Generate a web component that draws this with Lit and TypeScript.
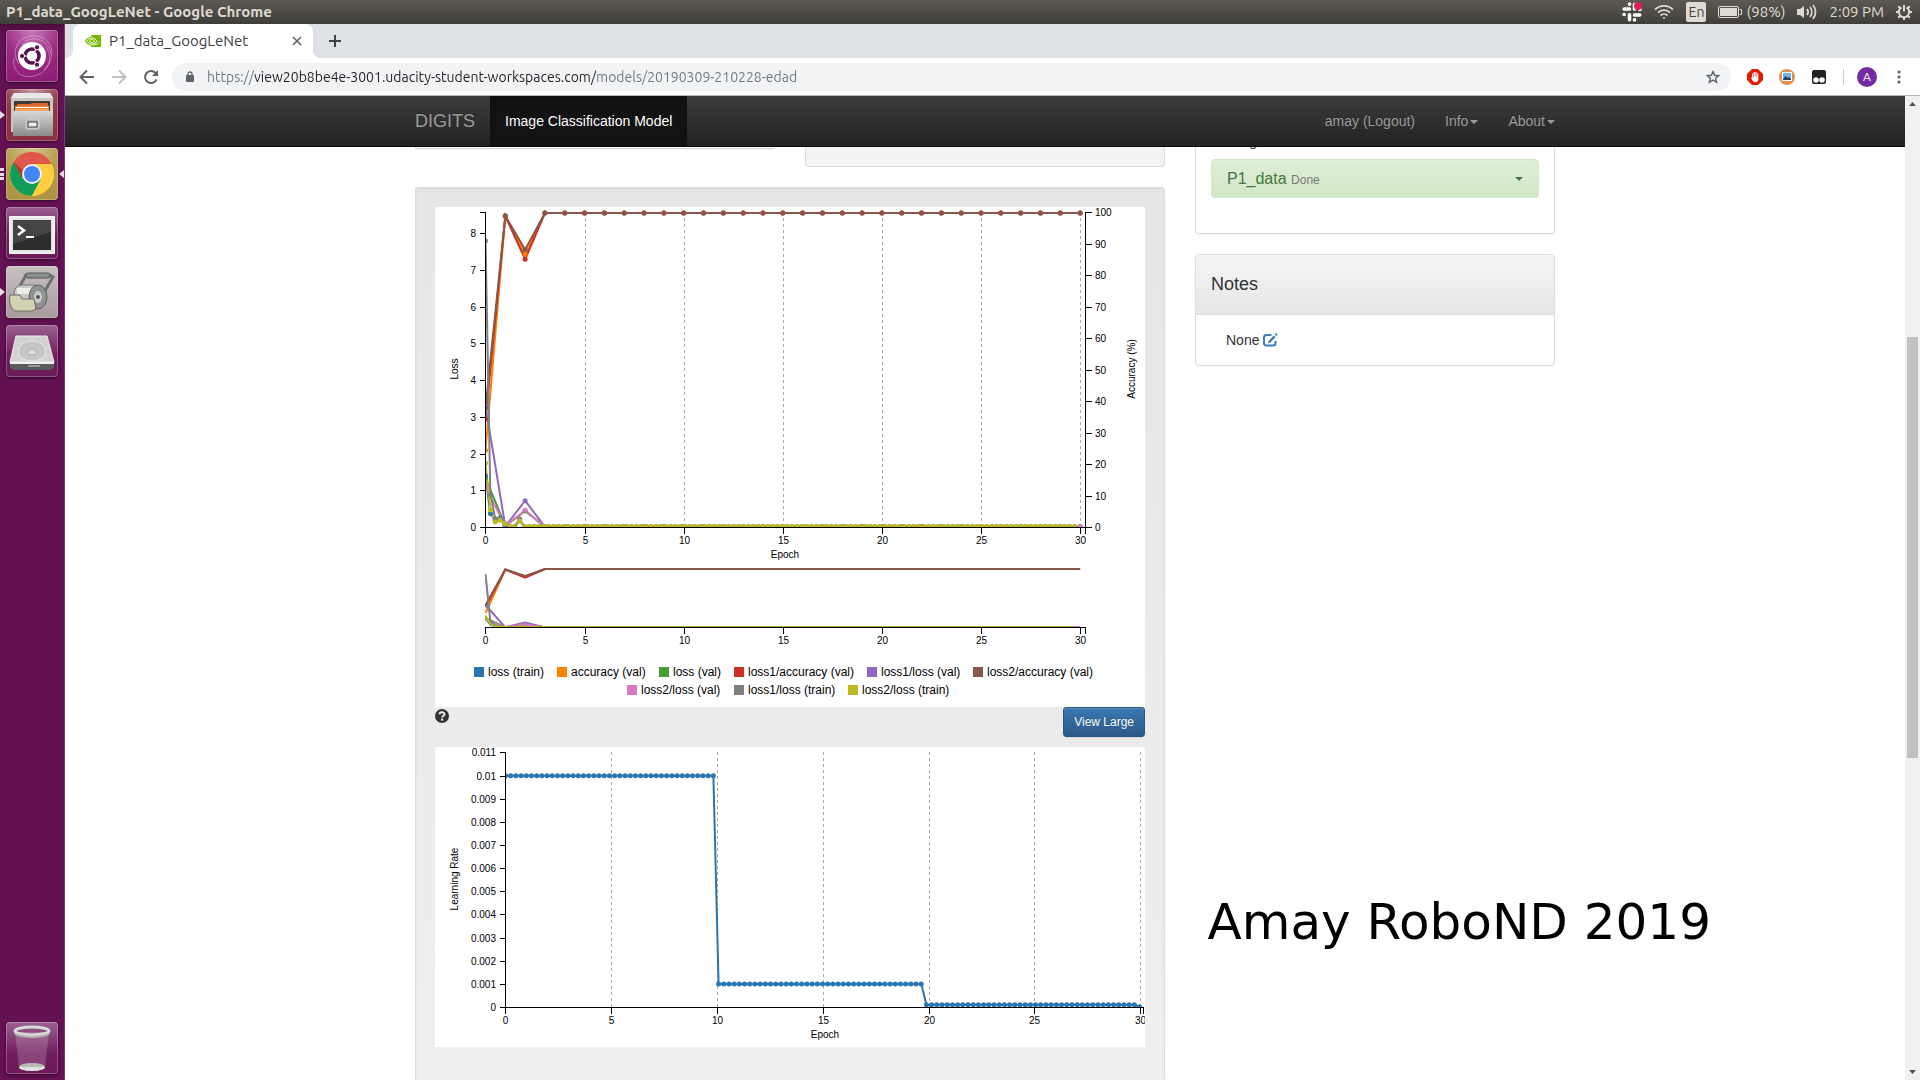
import { LitElement, html, svg, css } from "lit";
import { customElement } from "lit/decorators.js";

type Point = [number, number];

interface Series {
  name: string;
  color: string;
  axis: "loss" | "accuracy";
  points: Point[];
  legend: Point;
}

const range = (from: number, to: number, step = 1): number[] => {
  const out: number[] = [];
  for (let i = 0; from + i * step <= to + step / 1000; i++) out.push(from + i * step);
  return out;
};

/* Nearest pixel centre, so that one-pixel strokes stay sharp. */
const snap = (v: number): number => Math.ceil(v - 0.5) + 0.5;

const STEP = 0.2456;

/* Validation runs once per epoch and is flat from the third epoch on. */
const validation = (first: number[], rest: number): Point[] =>
  range(0, 30).map((e): Point => [e, e < first.length ? first[e] : rest]);

/* Training loss is sampled about four times per epoch. */
const training = (first: number[], rest: number): Point[] =>
  range(0, 121).map((i): Point => [i * STEP, i < first.length ? first[i] : rest]);

const SERIES: Series[] = [
  { name: "loss (train)", color: "#2a76b2", axis: "loss", legend: [39, 460], points: training([1.4, 0.38, 0.2, 0.26, 0.1, 0.03, 0.02, 0.2], 0.02) },
  { name: "accuracy (val)", color: "#ff8000", axis: "accuracy", legend: [122, 460], points: validation([24.6, 99, 86.8], 100) },
  { name: "loss (val)", color: "#449d32", axis: "loss", legend: [224, 460], points: validation([1.35, 0.04, 0.45], 0.02) },
  { name: "loss1/accuracy (val)", color: "#cf2e24", axis: "accuracy", legend: [299, 460], points: validation([34.4, 99, 85.3], 100) },
  { name: "loss1/loss (val)", color: "#9068bc", axis: "loss", legend: [432, 460], points: validation([3.3, 0.03, 0.73], 0.02) },
  { name: "loss2/accuracy (val)", color: "#88574c", axis: "accuracy", legend: [538, 460], points: validation([38, 99.1, 88.3], 100) },
  { name: "loss2/loss (val)", color: "#da78c1", axis: "loss", legend: [192, 478], points: validation([1.1, 0.04, 0.47], 0.02) },
  { name: "loss1/loss (train)", color: "#7f7f7f", axis: "loss", legend: [299, 478], points: training([7.8, 0.9, 0.24, 0.24, 0.06, 0.03, 0.03, 0.23], 0.02) },
  { name: "loss2/loss (train)", color: "#bcba20", axis: "loss", legend: [413, 478], points: training([1.75, 0.48, 0.15, 0.2, 0.11, 0.03, 0.02, 0.18], 0.03) },
];

const chartStyles = css`
  :host { display: block; background: #fff; }
  svg { display: block; width: 100%; height: auto; }
  text { font: 10px "Liberation Sans", Arial, sans-serif; fill: #000; }
  .end { text-anchor: end; }
  .mid { text-anchor: middle; }
  .legend { font-size: 12px; }
  .axis { fill: none; stroke: #000; shape-rendering: crispEdges; }
  .grid { stroke: #aaa; stroke-dasharray: 3 3; shape-rendering: crispEdges; }
  .line { fill: none; stroke-width: 2; }
`;

@customElement("loss-chart")
class LossChart extends LitElement {
  static styles = chartStyles;

  private x = (e: number) => 50.5 + e * 19.82;
  private y = (s: Series, v: number) => 320.5 - (s.axis === "loss" ? v * 36.75 : v * 3.145);
  private path(pts: Point[]) {
    return "M" + pts.map((p) => p.join(",")).join("L");
  }

  render() {
    const epochs = range(0, 30, 5);
    const main = SERIES.map((s) => ({ s, pts: s.points.map(([e, v]): Point => [this.x(e), this.y(s, v)]) }));
    const mini = SERIES.map((s) => ({
      s,
      pts: s.points.map(([e, v]): Point => [this.x(e), 420.5 - (320.5 - this.y(s, v)) * 0.186]),
    }));
    return html`
      <svg viewBox="0 0 710 500" role="img" aria-label="Loss and accuracy by epoch">
        <defs>
          <clipPath id="plot"><rect x="50" y="1" width="605" height="320"></rect></clipPath>
          <clipPath id="brush"><rect x="50" y="355" width="605" height="66"></rect></clipPath>
        </defs>
        ${epochs.slice(1).map((e) => svg`<line class="grid" x1=${snap(this.x(e))} x2=${snap(this.x(e))} y1="5" y2="320"></line>`)}
        <path class="axis" d="M44.5 5.5H50.5V320.5H650.5V326.5M656.5 5.5H650.5V320.5H656.5M44.5 320.5H50.5V326.5"></path>
        ${range(0, 8).map((v) => svg`
          <path class="axis" d=${`M44.5 ${Math.round(320 - v * 36.75) + 0.5}h6`}></path>
          <text class="end" x="41" y=${Math.round(324 - v * 36.75)}>${v}</text>`)}
        ${range(0, 100, 10).map((v) => svg`
          <path class="axis" d=${`M650.5 ${Math.round(320 - v * 3.15) + 0.5}h6`}></path>
          <text x="660" y=${Math.round(324 - v * 3.15)}>${v}</text>`)}
        ${epochs.map((e) => svg`
          <path class="axis" d=${`M${snap(this.x(e))} 320.5v6M${snap(this.x(e))} 420.5v6`}></path>
          <text class="mid" x=${snap(this.x(e))} y="337">${e}</text>
          <text class="mid" x=${snap(this.x(e))} y="437">${e}</text>`)}
        <g clip-path="url(#plot)">
          ${main.map(({ s, pts }) => svg`<path class="line" stroke=${s.color} d=${this.path(pts)}></path>`)}
          ${main.map(({ s, pts }) => pts.map(([cx, cy]) => svg`<circle cx=${cx} cy=${cy} r="2.5" fill=${s.color}></circle>`))}
        </g>
        <g clip-path="url(#brush)">
          ${mini.map(({ s, pts }) => svg`<path class="line" stroke=${s.color} d=${this.path(pts)}></path>`)}
        </g>
        <path class="axis" d="M50.5 5.5V320.5H650.5M50.5 426.5V420.5H650.5V426.5"></path>
        <text class="mid" x="350" y="351">Epoch</text>
        <text class="mid" transform="translate(23 162) rotate(-90)">Loss</text>
        <text class="mid" transform="translate(700 162) rotate(-90)">Accuracy (%)</text>
        ${SERIES.map(({ name, color, legend: [lx, ly] }) => svg`
          <rect x=${lx} y=${ly} width="10" height="10" fill=${color}></rect>
          <text class="legend" x=${lx + 14} y=${ly + 9}>${name}</text>`)}
      </svg>
    `;
  }
}

@customElement("rate-chart")
class RateChart extends LitElement {
  static styles = chartStyles;

  render() {
    const x = (e: number) => 70.5 + e * 21.16;
    const y = (v: number) => 260 - v * 23120;
    const rate = (i: number) => (i <= 40 ? 0.01 : i <= 80 ? 0.001 : i <= 121 ? 0.0001 : 0.00001);
    const pts = range(0, 122).map((i): Point => [x(i * STEP), y(rate(i))]);
    const epochs = range(0, 30, 5);
    const labels = ["0", "0.001", "0.002", "0.003", "0.004", "0.005", "0.006", "0.007", "0.008", "0.009", "0.01", "0.011"];
    return html`
      <svg viewBox="0 0 710 300" role="img" aria-label="Learning rate by epoch">
        <defs><clipPath id="plot"><rect x="70" y="1" width="640" height="260"></rect></clipPath></defs>
        ${epochs.slice(1).map((e) => svg`<line class="grid" x1=${snap(x(e))} x2=${snap(x(e))} y1="5" y2="260"></line>`)}
        ${labels.map((t, i) => svg`
          <path class="axis" d=${`M64.5 ${Math.round(260 - i * 23.15) + 0.5}h6`}></path>
          <text class="end" x="61" y=${Math.round(264 - i * 23.15)}>${t}</text>`)}
        ${epochs.map((e) => svg`
          <path class="axis" d=${`M${snap(x(e))} 260.5v6`}></path>
          <text class="mid" x=${snap(x(e))} y="277">${e}</text>`)}
        <g clip-path="url(#plot)">
          <path class="line" stroke="#2a76b2" d=${"M" + pts.map((p) => p.join(",")).join("L")}></path>
          ${pts.map(([cx, cy]) => svg`<circle cx=${cx} cy=${cy} r="2.5" fill="#2a76b2"></circle>`)}
        </g>
        <path class="axis" d="M64.5 5.5H70.5V260.5H708.5V266.5"></path>
        <text class="mid" x="390" y="291">Epoch</text>
        <text class="mid" transform="translate(23 132) rotate(-90)">Learning Rate</text>
      </svg>
    `;
  }
}

/* ---------- launcher artwork, 52 x 52 ---------- */

const dashArt = svg`
  <circle cx="26" cy="26" r="14" fill="#fff"></circle>
  <g fill="none" stroke="#fff" stroke-opacity=".35">
    <path d="M13 34C3 20 14 4 30 6s22 20 8 34"></path><path d="M40 17c8 12 2 26-12 29S6 40 8 28"></path>
    <path d="M16 15C24 4 42 8 45 24"></path>
  </g>
  <g stroke="#5e1048" stroke-width="3.6" fill="none"><circle cx="26" cy="26" r="7"></circle></g>
  <g stroke="#fff" stroke-width="1.2"><path d="M26 26L14 26M26 26l6-10.400M26 26l6 10.400"></path></g>
  <circle cx="26" cy="26" r="5" fill="#fff"></circle>
  <g fill="#5e1048" stroke="#fff"><circle cx="16" cy="26" r="2.600"></circle><circle cx="31" cy="17.300" r="2.600"></circle><circle cx="31" cy="34.700" r="2.600"></circle></g>`;

const filesArt = svg`
  <defs>
    <linearGradient id="metal" x2="0" y2="1"><stop stop-color="#d8d8d6"></stop><stop offset="1" stop-color="#8d8c8a"></stop></linearGradient>
  </defs>
  <path d="M8 4h36l3 5v34H5V9z" fill="#c9c8c6"></path><path d="M8 4h36l3 5H5z" fill="#e9e9e8"></path>
  <rect x="8" y="12" width="36" height="12" fill="#3e3a38"></rect>
  <path d="M11 15h13l2-1h16v8H11z" fill="#d9662c"></path><path d="M9 17h34v6H9z" fill="#e98b3e"></path>
  <path d="M10 18h32v1H10z" fill="#fff4e4"></path><path d="M9 20h34v3H9z" fill="#f2a25a"></path>
  <rect x="7" y="22" width="40" height="25" rx="1" fill="url(#metal)"></rect>
  <rect x="20" y="30" width="13" height="10" rx="2" fill="#b4b3b1" stroke="#d9d9d8"></rect>
  <rect x="22" y="33" width="9" height="5" fill="#eee" stroke="#444"></rect>`;

const chromeArt = svg`
  <circle cx="26" cy="26" r="22" fill="#ffcd40"></circle>
  <path d="M7.500 14.200A22 22 0 0 1 45.800 16H26L16.500 31z" fill="#e0574b"></path>
  <path d="M7.500 14A22 22 0 0 0 26 48L35 31H17z" fill="#0f9d58"></path>
  <path d="M26 48l9-17V16h10.500A22 22 0 0 1 26 48z" fill="#ffcd40"></path>
  <path d="M7.500 14L17 31l-.500-9z" fill="#b93527"></path>
  <circle cx="26" cy="26" r="10" fill="#f1f1f1"></circle><circle cx="26" cy="26" r="8" fill="#4285f4"></circle>`;

const terminalArt = svg`
  <rect x="3" y="9" width="46" height="38" rx="1" fill="#e4e4e2"></rect>
  <rect x="4" y="10" width="44" height="36" fill="none" stroke="#fff"></rect>
  <rect x="7" y="13" width="38" height="30" fill="#2d2d2d"></rect>
  <path d="M7 13h38v12L7 37z" fill="#444"></path>
  <path d="M12 19l6 4.500-6 4.500" fill="none" stroke="#fff" stroke-width="2.500"></path><path d="M20 30h8" stroke="#fff" stroke-width="2"></path>`;

const rollerArt = svg`
  <path d="M14 20L20 9h23l4 2-11 19" fill="none" stroke="#6c716f" stroke-width="3"></path>
  <rect x="20" y="7" width="24" height="5" rx="2" fill="#8b908e" stroke="#555"></rect>
  <rect x="8" y="19" width="28" height="24" rx="8" fill="#c8cac6" stroke="#777"></rect>
  <path d="M11 22h20v6H11z" fill="#ecedea"></path>
  <ellipse cx="32" cy="31" rx="9" ry="12" fill="#8f9492" stroke="#5b5f5d"></ellipse>
  <ellipse cx="32" cy="31" rx="4" ry="6" fill="#c9cccb"></ellipse><circle cx="32" cy="31" r="2" fill="#555"></circle>
  <path d="M4 29h10l2 4h12l2 10-4 2H9c-5-3-6-10-5-16z" fill="#d4d2b4" stroke="#6f6d58"></path>`;

const diskArt = svg`
  <path d="M10 11h31l7 26H4z" fill="#d2d2d2" stroke="#efefef"></path>
  <path d="M4 37h44v6l-4 2H8l-4-2z" fill="#5b5b5b"></path><path d="M4 37h44v2H4z" fill="#f2f2f2"></path>
  <ellipse cx="26" cy="26" rx="14" ry="10" fill="#c6c6c6" stroke="#e6e6e6"></ellipse>
  <ellipse cx="26" cy="27" rx="5" ry="3" fill="#dadada" stroke="#aaa"></ellipse>
  <path d="M22 41h12" stroke="#999" stroke-width="2"></path>`;

const trashArt = svg`
  <path d="M9 10h34l-4 36a14 4 0 0 1-26 0z" fill="#fff" fill-opacity=".18"></path>
  <ellipse cx="26" cy="45" rx="13" ry="4" fill="#b8bdb5"></ellipse><path d="M13 45a13 4 0 0 0 26 0" fill="#dfe2dc"></path>
  <ellipse cx="26" cy="9" rx="17" ry="4" fill="none" stroke="#d9dbd6" stroke-width="3"></ellipse>
  <path d="M8 9a18 5 0 0 0 36 0v2a18 5 0 0 1-36 0z" fill="#b3b6b0"></path>`;

const LAUNCHER = [
  { label: "Search your computer", tone: "violet", art: dashArt, running: "", active: false },
  { label: "Files", tone: "wine", art: filesArt, running: "one", active: false },
  { label: "Google Chrome", tone: "gold", art: chromeArt, running: "many", active: true },
  { label: "Terminal", tone: "plum", art: terminalArt, running: "", active: false },
  { label: "Paint roller", tone: "grey", art: rollerArt, running: "one", active: false },
  { label: "Disk", tone: "plum", art: diskArt, running: "", active: false },
];

@customElement("app-launcher")
class AppLauncher extends LitElement {
  static styles = css`
    :host {
      display: flex; flex-direction: column; gap: 7px; box-sizing: border-box;
      width: 65px; padding: 6px; border-right: 1px solid #7f3a70;
      background: linear-gradient(#4c0c3d, #621152 10px, #651153);
    }
    .item { position: relative; display: block; width: 52px; height: 52px; padding: 0; border: 0; border-radius: 4px; box-shadow: inset 0 0 0 1px rgba(255, 255, 255, .25), 0 1px 3px rgba(0, 0, 0, .5); }
    .violet { background: radial-gradient(circle at 50% 0, #c77ab8, #9b2a83 50%, #8a1b71); }
    .wine { background: radial-gradient(circle at 50% 0, #c79aa2, #8f3a48 50%, #8a3040); }
    .gold { background: radial-gradient(circle at 50% 0, #d6c48a, #b59a4a 50%, #ad9140); }
    .plum { background: linear-gradient(#9a6090, #701d5e 60%, #6c1a5a); }
    .grey { background: linear-gradient(#c9bfc2, #a8999d); }
    .trash { margin-top: auto; }
    .art { display: block; }
    .run, .now { position: absolute; top: 20px; width: 6px; height: 12px; fill: #e6dce4; }
    .run { left: -6px; }
    .now { right: -6px; }
  `;

  render() {
    return html`
      ${LAUNCHER.map((i) => html`
        <button class="item ${i.tone}" aria-label=${i.label}>
          <svg class="art" viewBox="0 0 52 52" width="52" height="52">${i.art}</svg>
          ${i.running === "one" ? html`<svg class="run" viewBox="0 0 6 12"><path d="M0 2l5 4-5 4z"></path></svg>` : ""}
          ${i.running === "many" ? html`<svg class="run" viewBox="0 0 6 12"><path d="M0 0h4v3H0zM0 5h4v3H0zM0 9h4v3H0z"></path></svg>` : ""}
          ${i.active ? html`<svg class="now" viewBox="0 0 6 12"><path d="M6 2L1 6l5 4z"></path></svg>` : ""}
        </button>`)}
      <button class="item plum trash" aria-label="Trash"><svg class="art" viewBox="0 0 52 52" width="52" height="52">${trashArt}</svg></button>
    `;
  }
}

@customElement("system-bar")
class SystemBar extends LitElement {
  static styles = css`
    :host {
      display: flex; justify-content: space-between; align-items: center; height: 24px; padding: 0 8px 0 6px;
      font: 15px/24px Ubuntu, "Noto Sans", sans-serif; color: #dfdbd2;
      background: linear-gradient(#5b5950, #3f3e39);
    }
    .title { font-weight: 700; }
    .tray { display: flex; align-items: center; gap: 12px; }
    .power { display: flex; align-items: center; gap: 4px; }
    .lang { width: 20px; height: 20px; border-radius: 2px; background: #dfdbd2; color: #45443e; font-size: 14px; line-height: 20px; text-align: center; }
    svg { display: block; }
  `;

  render() {
    return html`
      <span class="title">P1_data_GoogLeNet - Google Chrome</span>
      <div class="tray">
        <svg width="20" height="20" viewBox="0 0 20 20">
          <g stroke="#fff" stroke-width="3.600" stroke-linecap="round">
            <path d="M7.500 2.200V2M7.500 7H2.200M12.500 13h5.300M7.500 12.800v5M12.500 17.800v.2M2 12.500h.2M18 7.500h-.2M12.500 2.500V7"></path>
          </g>
          <circle cx="16" cy="4" r="4" fill="#e01e5a"></circle>
        </svg>
        <svg width="20" height="16" viewBox="0 0 20 16" fill="none" stroke="#dfdbd2" stroke-width="1.800">
          <path d="M1 5.500a13 13 0 0 1 18 0M4 8.500a9 9 0 0 1 12 0M6.500 11.500a5 5 0 0 1 7 0"></path><circle cx="10" cy="14" r="1" fill="#dfdbd2" stroke="none"></circle>
        </svg>
        <span class="lang">En</span>
        <span class="power">
          <svg width="24" height="14" viewBox="0 0 24 14">
            <rect x=".5" y="1.500" width="20" height="11" rx="1.500" fill="none" stroke="#dfdbd2"></rect><rect x="2" y="3" width="17" height="8" fill="#dfdbd2"></rect>
            <path d="M21.500 4.500h2v5h-2" fill="none" stroke="#dfdbd2"></path>
          </svg>(98%)
        </span>
        <svg width="20" height="18" viewBox="0 0 20 18" fill="none" stroke="#dfdbd2" stroke-width="1.800">
          <path d="M0 6h3l4-3v12l-4-3H0z" fill="#dfdbd2" stroke="none"></path><path d="M10 6a5 5 0 0 1 0 6M13 4a8 8 0 0 1 0 10M16 2a11 11 0 0 1 0 14"></path>
        </svg>
        <span>2:09 PM</span>
        <svg width="16" height="16" viewBox="0 0 16 16" fill="none" stroke="#dfdbd2" stroke-width="2">
          <path d="M5.500 3.400a5.200 5.200 0 1 0 5 0M8 1v6.500"></path><path d="M0 8h3M13 8h3M8 13v3M2.300 2.300l2 2M13.700 2.300l-2 2M2.300 13.700l2-2M13.700 13.700l-2-2"></path>
        </svg>
      </div>
    `;
  }
}

@customElement("browser-chrome")
class BrowserChrome extends LitElement {
  static styles = css`
    :host { display: block; font-family: Ubuntu, "Noto Sans", sans-serif; }
    button { padding: 0; border: 0; background: none; }
    svg { display: block; }
    .strip { display: flex; align-items: center; height: 34px; padding-left: 8px; background: #dee1e6; }
    .tab { position: relative; display: flex; align-items: center; gap: 8px; box-sizing: border-box; width: 240px; height: 34px; padding: 0 11px 0 12px; border-radius: 8px 8px 0 0; background: #fff; font-size: 15px; line-height: 20px; color: #3c4043; }
    .tab::before, .tab::after { content: ""; position: absolute; bottom: 0; width: 8px; height: 8px; }
    .tab::before { left: -8px; background: radial-gradient(circle at 0 0, transparent 8px, #fff 8px); }
    .tab::after { right: -8px; background: radial-gradient(circle at 100% 0, transparent 8px, #fff 8px); }
    .name { flex: 1; }
    .new { margin-left: 16px; }
    .bar { display: flex; align-items: center; gap: 16px; box-sizing: border-box; height: 38px; padding: 0 17px 0 14px; border-bottom: 1px solid #b4b6b5; background: #fff; }
    .address { flex: 1; display: flex; align-items: center; height: 28px; margin-left: -3px; padding: 0 11px 0 14px; border-radius: 14px; background: #f1f3f4; }
    .url {
      flex: 1; min-width: 0; margin-left: 13px; padding: 0; border: 0; outline: 0;
      font: 14px/24px Ubuntu, "Noto Sans", sans-serif; color: transparent;
      background: linear-gradient(90deg, #70757a 48px, #202124 48px, #202124 389px, #70757a 389px);
      background-clip: text; -webkit-background-clip: text;
    }
    .rule { width: 1px; height: 16px; margin-right: -3px; background: #c8cacc; }
    .avatar { width: 20px; height: 20px; margin-right: 2px; border-radius: 10px; background: #732da0; color: #fff; font: 12px/20px Ubuntu, "Noto Sans", sans-serif; }
  `;

  render() {
    return html`
      <div class="strip">
        <div class="tab">
          <svg width="16" height="12" viewBox="0 0 16 12">
            <path d="M6 0h10v12H6v-1.600C3.500 10 1 8.500 0 6c1.500-2.500 3.500-3.800 6-4.200z" fill="#76b900"></path>
            <path d="M6 1.800V.8M1.800 6c1.200-2 3-3 5.200-2.900 2.300.1 4 1.500 5 2.900-1.200 1.800-3 3.100-5.200 3.100S3 8 1.800 6z" fill="none" stroke="#fff" stroke-width=".9"></path>
            <path d="M4.200 6c.8-1.300 1.800-1.600 2.800-1.400S9 5.300 9.600 6c-.9 1.200-1.700 1.800-2.700 1.600S4.800 7 4.200 6zM6 9.500c4 .8 7-.5 8.500-3" fill="none" stroke="#fff" stroke-width=".8"></path>
          </svg>
          <span class="name">P1_data_GoogLeNet</span>
          <button aria-label="Close tab"><svg width="10" height="10" viewBox="0 0 10 10" stroke="#5f6368" stroke-width="1.600"><path d="M1 1l8 8M9 1L1 9"></path></svg></button>
        </div>
        <button class="new" aria-label="New tab"><svg width="12" height="12" viewBox="0 0 12 12" stroke="#3c4043" stroke-width="2"><path d="M6 0v12M0 6h12"></path></svg></button>
      </div>
      <div class="bar">
        <button aria-label="Back"><svg width="16" height="16" viewBox="0 0 16 16" fill="none" stroke="#5f6368" stroke-width="2"><path d="M15 8H2M8 1.500L1.500 8 8 14.500"></path></svg></button>
        <button aria-label="Forward"><svg width="16" height="16" viewBox="0 0 16 16" fill="none" stroke="#bdc1c6" stroke-width="2"><path d="M1 8h13M8 1.500L14.500 8 8 14.500"></path></svg></button>
        <button aria-label="Reload"><svg width="16" height="16" viewBox="0 0 16 16" fill="none" stroke="#5f6368" stroke-width="2"><path d="M13.600 10.400A6 6 0 1 1 12.500 4"></path><path d="M15 1v6H9z" fill="#5f6368" stroke="none"></path></svg></button>
        <div class="address">
          <svg width="8" height="12" viewBox="0 0 8 12"><rect y="4" width="8" height="7" rx="1" fill="#5f6368"></rect><path d="M2 4.500V3a2 2 0 0 1 4 0v1.500" fill="none" stroke="#5f6368" stroke-width="1.300"></path></svg>
          <input class="url" type="text" aria-label="Address" value="https://view20b8be4e-3001.udacity-student-workspaces.com/models/20190309-210228-edad">
          <button aria-label="Bookmark"><svg width="14" height="14" viewBox="0 0 14 14" fill="none" stroke="#5f6368" stroke-width="1.400"><path d="M7 1.500l1.600 3.800 4.100.3-3.100 2.700 1 4L7 10.100l-3.600 2.200 1-4L1.300 5.600l4.100-.3z"></path></svg></button>
        </div>
        <button aria-label="Ad blocker"><svg width="16" height="16" viewBox="0 0 16 16"><path d="M5 0h6l5 5v6l-5 5H5l-5-5V5z" fill="#e01b00"></path><path d="M5 4.500h1.200V8h.5V3h1.200v4.500h.5V3h1.200v5h.5V4.500h1.200V10c0 2-1 3.300-2.800 3.300C6.500 13.300 5 11.500 4 8.800L5 8.500z" fill="#fff"></path></svg></button>
        <button aria-label="Screenshot"><svg width="16" height="16" viewBox="0 0 16 16"><circle cx="8" cy="8" r="8" fill="#e0914f"></circle><rect x="3" y="3" width="10" height="9" fill="#fff"></rect><rect x="4" y="4" width="8" height="7" fill="#6fb6ea"></rect><path d="M4 10l2.500-3L9 9l1-1 2 2v1H4z" fill="#23405f"></path></svg></button>
        <button aria-label="Scripts"><svg width="16" height="16" viewBox="0 0 16 16"><rect x="1" y="1" width="14" height="14" rx="2" fill="#222"></rect><circle cx="5" cy="11" r="2.800" fill="#fff"></circle><circle cx="11" cy="11" r="2.800" fill="#fff"></circle></svg></button>
        <span class="rule"></span>
        <button class="avatar" aria-label="Profile A">A</button>
        <button aria-label="Menu"><svg width="8" height="16" viewBox="0 0 8 16" fill="#5f6368"><circle cx="4" cy="3" r="1.600"></circle><circle cx="4" cy="8" r="1.600"></circle><circle cx="4" cy="13" r="1.600"></circle></svg></button>
      </div>
    `;
  }
}

@customElement("digits-page")
class DigitsPage extends LitElement {
  static styles = css`
    :host { display: flex; flex-direction: column; position: relative; overflow: hidden; background: #fff; font: 14px/20px "Liberation Sans", Arial, sans-serif; color: #333; }
    a { color: inherit; text-decoration: none; }
    svg { display: block; }
    .nav { flex: none; border-bottom: 1px solid #080808; background: linear-gradient(#3c3c3c, #222); color: #9d9d9d; text-shadow: 0 -1px 0 rgba(0, 0, 0, .25); }
    .inner, .columns { display: flex; box-sizing: border-box; width: 100%; max-width: 1170px; margin: 0 auto; }
    .inner { height: 50px; padding-left: 15px; }
    .inner a { padding: 15px; }
    .inner .brand { padding-left: 0; font-size: 18px; }
    .inner .current { background: #131313; color: #fff; box-shadow: inset 0 3px 9px rgba(0, 0, 0, .25); }
    .right { display: flex; margin-left: auto; }
    .caret { display: inline-block; margin-left: 2px; vertical-align: middle; border: 4px solid transparent; border-top-color: currentColor; border-bottom: 0; }
    .scrolled { flex: 1; display: flex; min-height: 0; overflow: hidden; }
    .columns { padding: 0 15px; display: grid; grid-template-columns: 25fr 12fr; gap: 30px; }
    .main, .side { display: flex; flex-direction: column; gap: 20px; min-width: 0; }
    .pair { display: grid; grid-template-columns: 1fr 1fr; gap: 30px; align-items: start; }
    .tail { box-sizing: border-box; border: 1px solid #ddd; border-top: 0; border-radius: 0 0 4px 4px; }
    .plain { height: 2px; border-color: #d4d4d4; border-radius: 0 0 2px 2px; box-shadow: 0 1px 2px rgba(0, 0, 0, .05); }
    .shaded { height: 20px; background: #f3f3f3; }
    .well { flex: 1; padding: 19px; border: 1px solid #dcdcdc; border-bottom: 0; border-radius: 4px 4px 0 0; background: linear-gradient(#e6e6e6, #efefef); box-shadow: inset 0 1px 3px rgba(0, 0, 0, .05); }
    .tools { display: flex; justify-content: space-between; align-items: flex-start; height: 40px; }
    .help { padding: 2px 0; border: 0; background: none; }
    .large { box-sizing: border-box; height: 30px; padding: 0 10px; border: 1px solid #2a5783; border-radius: 3px; background: linear-gradient(#3a78b5, #2c5985); color: #fff; font: 12px/18px "Liberation Sans", Arial, sans-serif; text-shadow: 0 -1px 0 rgba(0, 0, 0, .2); box-shadow: inset 0 1px 0 rgba(255, 255, 255, .15), 0 1px 1px rgba(0, 0, 0, .075); }
    .panel { border: 1px solid #ddd; border-radius: 4px; box-shadow: 0 1px 2px rgba(0, 0, 0, .05); }
    .first { padding: 0 15px 35px; border-top: 0; border-radius: 0 0 4px 4px; }
    .kind { margin: -16px 0 8px; padding-left: 15px; }
    .job { display: flex; justify-content: space-between; align-items: center; box-sizing: border-box; width: 100%; height: 39px; padding: 1px 15px 0; border: 1px solid #d3e7c3; border-radius: 4px; background: linear-gradient(#dfeed7, #d2e7c5); color: #457541; font: 16px/20px "Liberation Sans", Arial, sans-serif; }
    .job small { font-size: 12px; color: #777; }
    .head { padding: 20px 15px; border-bottom: 1px solid #ddd; border-radius: 4px 4px 0 0; background: linear-gradient(#f5f5f5, #e6e6e6); }
    .head h4 { margin: 0; font-size: 18px; line-height: 19px; font-weight: 400; }
    .note { display: flex; align-items: center; gap: 4px; padding: 15px 30px; }
    .mark { position: absolute; right: 194px; bottom: 128px; font: 50px/60px "DejaVu Sans", sans-serif; color: #000; white-space: nowrap; }
  `;

  render() {
    return html`
      <nav class="nav"><div class="inner">
        <a class="brand" href="#">DIGITS</a><a class="current" href="#">Image Classification Model</a>
        <div class="right"><a href="#">amay (Logout)</a><a href="#">Info<span class="caret"></span></a><a href="#">About<span class="caret"></span></a></div>
      </div></nav>
      <div class="scrolled"><div class="columns">
        <main class="main">
          <div class="pair"><div class="tail plain"></div><div class="tail shaded"></div></div>
          <section class="well">
            <loss-chart></loss-chart>
            <div class="tools">
              <button class="help" aria-label="Help"><svg width="14" height="14" viewBox="0 0 14 14"><circle cx="7" cy="7" r="7" fill="#333"></circle><path d="M4.500 5.300C4.500 2.600 9.500 2.600 9.500 5.200c0 1.800-2.400 1.700-2.400 3.400" fill="none" stroke="#eee" stroke-width="2"></path><path d="M6 9.600h2.200v2H6z" fill="#eee"></path></svg></button>
              <button class="large">View Large</button>
            </div>
            <rate-chart></rate-chart>
          </section>
        </main>
        <aside class="side">
          <section class="panel first">
            <div class="kind">Image</div>
            <button class="job"><span>P1_data <small>Done</small></span><span class="caret"></span></button>
          </section>
          <section class="panel">
            <div class="head"><h4>Notes</h4></div>
            <div class="note">None
              <a href="#" aria-label="Edit notes"><svg width="15" height="14" viewBox="0 0 15 14" fill="none" stroke="#3a7bbd" stroke-width="2"><path d="M8.500 2H3.500Q1 2 1 4.500v5.500Q1 12.500 3.500 12.500h6.500Q12.500 12.500 12.500 10V8"></path><path d="M6.500 8.800L11.500 3.400" stroke-width="2.400"></path><path d="M5 10.400l.6-2.800 2.200 2z" fill="#3a7bbd" stroke="none"></path><path d="M12.600 2.300l1.300-1.400" stroke-width="2.400"></path></svg></a>
            </div>
          </section>
        </aside>
      </div></div>
      <div class="mark">Amay RoboND 2019</div>
    `;
  }
}

@customElement("app-root")
class AppRoot extends LitElement {
  static styles = css`
    :host { display: flex; flex-direction: column; height: 100vh; overflow: hidden; }
    .desktop { flex: 1; display: flex; min-height: 0; }
    .window { flex: 1; display: flex; flex-direction: column; min-width: 0; }
    .view { flex: 1; display: flex; min-height: 0; }
    digits-page { flex: 1; }
    .scroll { display: flex; flex-direction: column; width: 15px; background: #f1f1f1; }
    .before { flex: 226; }
    .thumb { flex: 421; margin: 0 2px; background: #c1c1c1; }
    .after { flex: 307; }
    .arrow { display: block; width: 15px; height: 15px; fill: #505050; }
  `;

  render() {
    return html`
      <system-bar></system-bar>
      <div class="desktop">
        <app-launcher></app-launcher>
        <div class="window">
          <browser-chrome></browser-chrome>
          <div class="view">
            <digits-page></digits-page>
            <div class="scroll">
              <svg class="arrow" viewBox="0 0 15 15"><path d="M4 10h7L7.500 6z"></path></svg>
              <div class="before"></div><div class="thumb"></div><div class="after"></div>
              <svg class="arrow" viewBox="0 0 15 15"><path d="M4 5h7L7.500 9z"></path></svg>
            </div>
          </div>
        </div>
      </div>
    `;
  }
}
